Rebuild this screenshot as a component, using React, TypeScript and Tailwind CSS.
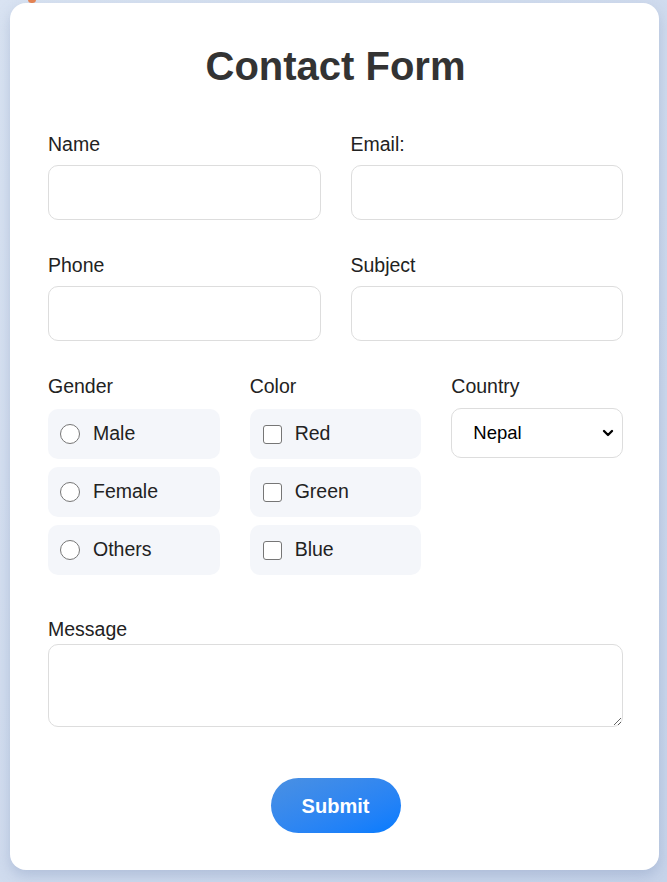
import { ChevronDown } from 'lucide-react'

const genders = ['Male', 'Female', 'Others']
const colors = ['Red', 'Green', 'Blue']

const inputCls =
  'block h-[55px] w-full rounded-[10px] border border-[#dddddd] bg-white px-3 text-[18px] outline-none'

function Field({ label }: { label: string }) {
  return (
    <div className="flex flex-col">
      <label className="mb-[10px] text-[19.5px] leading-[21px] text-[#222]">{label}</label>
      <input type="text" className={inputCls} />
    </div>
  )
}

export default function App() {
  return (
    <div
      className="relative min-h-[882px] bg-gradient-to-br from-[#d9e3f2] to-[#c7d4ea] pl-[10px] pr-[8px] pt-[3px] pb-[13px]"
      style={{ fontFamily: '"Liberation Sans", Arial, sans-serif' }}
    >
      <div className="absolute left-[28px] top-[-4px] h-[7px] w-[8px] rounded-full bg-[#e8834f]" />
      <div className="relative rounded-[16px] bg-white pl-[38px] pr-[36px] pt-[40px] pb-[37px] shadow-[0_6px_14px_rgba(120,140,180,0.35)]">
        <h1 className="text-center text-[40px] font-bold leading-[46px] text-[#333]">Contact Form</h1>

        <div className="mt-[45px] grid grid-cols-2 gap-x-[30px] gap-y-[35px]">
          <Field label="Name" />
          <Field label="Email:" />
          <Field label="Phone" />
          <Field label="Subject" />
        </div>

        <div className="mt-[35px] grid grid-cols-3 gap-x-[30px]">
          <div className="flex flex-col">
            <span className="mb-[12px] text-[19.5px] leading-[21px] text-[#222]">Gender</span>
            <div className="flex flex-col gap-[8px]">
              {genders.map((g) => (
                <label
                  key={g}
                  className="flex h-[50px] items-center gap-[13px] rounded-[10px] bg-[#f4f6fa] pl-[12px] text-[19.5px] text-[#222]"
                >
                  <span className="h-[20px] w-[20px] rounded-full border-[1.5px] border-[#767676] bg-white" />
                  {g}
                </label>
              ))}
            </div>
          </div>
          <div className="flex flex-col">
            <span className="mb-[12px] text-[19.5px] leading-[21px] text-[#222]">Color</span>
            <div className="flex flex-col gap-[8px]">
              {colors.map((c) => (
                <label
                  key={c}
                  className="flex h-[50px] items-center gap-[13px] rounded-[10px] bg-[#f4f6fa] pl-[13px] text-[19.5px] text-[#222]"
                >
                  <span className="h-[19px] w-[19px] rounded-[3px] border-[1.5px] border-[#767676] bg-white" />
                  {c}
                </label>
              ))}
            </div>
          </div>
          <div className="flex flex-col">
            <span className="mb-[11px] text-[19.5px] leading-[21px] text-[#222]">Country</span>
            <div className="flex h-[50px] items-center justify-between rounded-[10px] border border-[#dddddd] bg-white pl-[21px] pr-[6px] text-[18.5px] text-black">
              <span>Nepal</span>
              <ChevronDown className="h-[16px] w-[16px]" strokeWidth={3.5} />
            </div>
          </div>
        </div>

        <div className="mt-[44px] flex flex-col">
          <label className="mb-[4px] text-[19.5px] leading-[21px] text-[#222]">Message</label>
          <textarea className="block h-[83px] w-full rounded-[10px] border border-[#dddddd] bg-white px-3 text-[18px] outline-none" />
        </div>

        <div className="mt-[51px] flex justify-center">
          <button className="h-[55px] w-[130px] rounded-full bg-gradient-to-br from-[#4a90e2] to-[#007bff] text-[20px] font-bold text-white">
            Submit
          </button>
        </div>
      </div>
    </div>
  )
}
